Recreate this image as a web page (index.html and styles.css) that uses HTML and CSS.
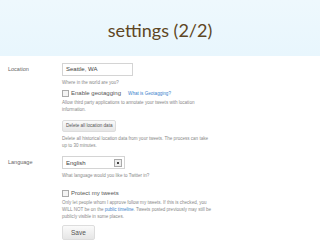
FILE: index.html
```html
<!DOCTYPE html>
<html lang="en">
<head>
  <meta charset="UTF-8">
  <title>settings (2/2)</title>
  <link rel="stylesheet" href="styles.css">
</head>
<body>
  <div class="slide">
    <header class="title-band">
      <h1>settings (2/2)</h1>
    </header>

    <main class="form">
      <div class="row">
        <div class="label">Location</div>
        <div class="field">
          <div class="input">Seattle, WA</div>
          <p class="hint">Where in the world are you?</p>

          <div class="check-line">
            <span class="box"></span>
            <span class="check-text">Enable geotagging</span>
            <a class="link what">What is Geotagging?</a>
          </div>
          <p class="hint tight">Allow third party applications to annotate your tweets with location<br>information.</p>

          <div class="btn small">Delete all location data</div>
          <p class="hint">Delete all historical location data from your tweets. The process can take<br>up to 30 minutes.</p>
        </div>
      </div>

      <div class="row lang">
        <div class="label">Language</div>
        <div class="field">
          <div class="select">
            <span>English</span>
            <span class="arrow"></span>
          </div>
          <p class="hint">What language would you like to Twitter in?</p>

          <div class="check-line protect">
            <span class="box"></span>
            <span class="check-text">Protect my tweets</span>
          </div>
          <p class="hint tight">Only let people whom I approve follow my tweets. If this is checked, you<br>WILL NOT be on the <a class="link">public timeline</a>. Tweets posted previously may still be<br>publicly visible in some places.</p>

          <div class="btn save">Save</div>
        </div>
      </div>
    </main>

    <footer class="bottom-bar"></footer>
  </div>
</body>
</html>
```

FILE: styles.css
```css
body {
  margin: 0;
  padding: 0;
  background-color: #ffffff;
  font-family: 'Liberation Sans', Arial, sans-serif;
  color: #444444;
}

.slide {
  width: 320px;
  height: 240px;
  display: flex;
  flex-direction: column;
  overflow: hidden;
}

.title-band {
  flex-shrink: 0;
  height: 56px;
  background: linear-gradient(to bottom, #eef8fd, #e8f6fd);
  display: flex;
  justify-content: center;
  align-items: center;
}

h1 {
  margin: 0;
  padding-top: 4px;
  font-family: Lato, 'Open Sans', sans-serif;
  font-weight: 400;
  font-size: 18px;
  color: #5e4623;
}

.form {
  flex: 1;
  padding-top: 7px;
}

.row {
  display: grid;
  grid-template-columns: 62px 1fr;
}

.row.lang {
  margin-top: 7px;
}

.label {
  padding-left: 8px;
  padding-top: 3px;
  font-size: 5.5px;
  color: #666666;
}

.input {
  width: 66px;
  height: 11px;
  border: 1px solid #d4d4d4;
  padding-left: 3px;
  font-size: 6px;
  line-height: 11px;
  color: #444444;
}

.hint {
  margin: 3px 0 0 0;
  font-size: 4.55px;
  line-height: 7px;
  color: #8a8a8a;
}

.hint.tight {
  margin-top: 1px;
}

.check-line {
  display: flex;
  align-items: center;
  margin-top: 2px;
  height: 10px;
}

.box {
  width: 5px;
  height: 5px;
  border: 1px solid #aaaaaa;
  background-color: #f4f4f4;
  margin-right: 2px;
}

.check-text {
  font-size: 6px;
  color: #555555;
}

.link {
  color: #3a82cc;
}

.what {
  margin-left: 7px;
  font-size: 4.6px;
}

.btn {
  display: inline-block;
  border: 1px solid #dddddd;
  border-radius: 2px;
  background: linear-gradient(to bottom, #fafafa, #e6e6e6);
  color: #555555;
}

.btn.small {
  margin-top: 1px;
  padding: 2px 3px;
  font-size: 4.6px;
  line-height: 6px;
}

.select {
  width: 56px;
  height: 11px;
  border: 1px solid #d4d4d4;
  display: flex;
  justify-content: space-between;
  align-items: center;
  padding: 0 2px 0 3px;
  font-size: 6px;
  color: #444444;
}

.arrow {
  width: 6px;
  height: 6px;
  border: 1px solid #aaaaaa;
  background: linear-gradient(#444444, #444444) center / 2px 2px no-repeat, #eeeeee;
}

.check-line.protect {
  margin-top: 9px;
}

.btn.save {
  margin-top: 5px;
  padding: 3px 8px;
  font-size: 6.5px;
  line-height: 7px;
}

.bottom-bar {
  height: 4px;
  background: linear-gradient(to right, #6a6a6a, #8a8a8a 50%, #6a6a6a);
}
```
